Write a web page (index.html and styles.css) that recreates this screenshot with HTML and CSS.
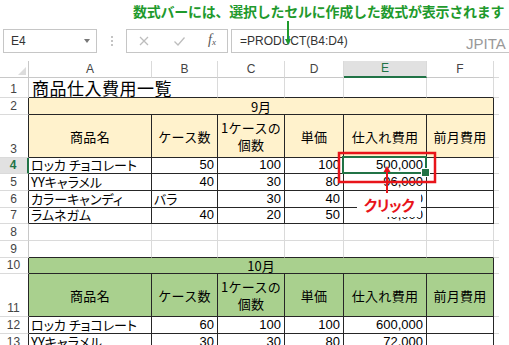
FILE: index.html
```html
<!DOCTYPE html>
<html lang="ja">
<head>
<meta charset="utf-8">
<title>商品仕入費用一覧</title>
<link rel="stylesheet" href="styles.css">
</head>
<body>
<div class="annot">数式バーには、選択したセルに作成した数式が表示されます</div>

<div class="fbar">
  <div class="namebox"><span>E4</span><span class="caret"></span></div>
  <div class="dots"><i></i><i></i><i></i></div>
  <div class="btns">
    <svg class="ico" width="12" height="12" viewBox="0 0 12 12"><path d="M2 2 L10 10 M10 2 L2 10" stroke="#bdbdbd" stroke-width="1.3" fill="none"/></svg>
    <svg class="ico" width="13" height="12" viewBox="0 0 13 12"><path d="M1.5 6.5 L5 10 L11.5 2.5" stroke="#bdbdbd" stroke-width="1.3" fill="none"/></svg>
    <span class="fx">f<sub>x</sub></span>
  </div>
  <div class="fbox">=PRODUCT(B4:D4)</div>
</div>

<div class="sheet">
  <div class="c corner"></div>
  <div class="c ch">A</div>
  <div class="c ch">B</div>
  <div class="c ch">C</div>
  <div class="c ch">D</div>
  <div class="c ch selc">E</div>
  <div class="c ch">F</div>
  <div class="c ch g"></div>

  <div class="c rh">1</div>
  <div class="c title bt span2">商品仕入費用一覧</div>
  <div class="c bt"></div>
  <div class="c bt"></div>
  <div class="c bt"></div>
  <div class="c bt"></div>
  <div class="c g"></div>

  <div class="c rh rt">2</div>
  <div class="c t y mid span6">9月</div>
  <div class="c g"></div>

  <div class="c rh rt">3</div>
  <div class="c t y hd">商品名</div>
  <div class="c t y hd">ケース数</div>
  <div class="c t y hd">1ケースの<br>個数</div>
  <div class="c t y hd">単価</div>
  <div class="c t y hd">仕入れ費用</div>
  <div class="c t y hd">前月費用</div>
  <div class="c g"></div>

  <div class="c rh rt selr">4</div>
  <div class="c t jp">ロッカ チョコレート</div>
  <div class="c t r">50</div>
  <div class="c t r">100</div>
  <div class="c t r">100</div>
  <div class="c t r sel">500,000</div>
  <div class="c t"></div>
  <div class="c g"></div>

  <div class="c rh rt">5</div>
  <div class="c t jp">YYキャラメル</div>
  <div class="c t r">40</div>
  <div class="c t r">30</div>
  <div class="c t r">80</div>
  <div class="c t r">96,000</div>
  <div class="c t"></div>
  <div class="c g"></div>

  <div class="c rh rt">6</div>
  <div class="c t jp">カラーキャンディ</div>
  <div class="c t jp">バラ</div>
  <div class="c t r">30</div>
  <div class="c t r">40</div>
  <div class="c t r">1,200</div>
  <div class="c t"></div>
  <div class="c g"></div>

  <div class="c rh rt">7</div>
  <div class="c t jp">ラムネガム</div>
  <div class="c t r">40</div>
  <div class="c t r">20</div>
  <div class="c t r">50</div>
  <div class="c t r">40,000</div>
  <div class="c t"></div>
  <div class="c g"></div>

  <div class="c rh">8</div>
  <div class="c"></div>
  <div class="c"></div>
  <div class="c"></div>
  <div class="c"></div>
  <div class="c"></div>
  <div class="c"></div>
  <div class="c g"></div>

  <div class="c rh">9</div>
  <div class="c bt"></div>
  <div class="c bt"></div>
  <div class="c bt"></div>
  <div class="c bt"></div>
  <div class="c bt"></div>
  <div class="c bt"></div>
  <div class="c g"></div>

  <div class="c rh rt">10</div>
  <div class="c t gr mid span6">10月</div>
  <div class="c g"></div>

  <div class="c rh rt">11</div>
  <div class="c t gr hd">商品名</div>
  <div class="c t gr hd">ケース数</div>
  <div class="c t gr hd">1ケースの<br>個数</div>
  <div class="c t gr hd">単価</div>
  <div class="c t gr hd">仕入れ費用</div>
  <div class="c t gr hd">前月費用</div>
  <div class="c g"></div>

  <div class="c rh rt">12</div>
  <div class="c t jp">ロッカ チョコレート</div>
  <div class="c t r">60</div>
  <div class="c t r">100</div>
  <div class="c t r">100</div>
  <div class="c t r">600,000</div>
  <div class="c t"></div>
  <div class="c g"></div>

  <div class="c rh rt">13</div>
  <div class="c t jp">YYキャラメル</div>
  <div class="c t r">30</div>
  <div class="c t r">30</div>
  <div class="c t r">80</div>
  <div class="c t r">72,000</div>
  <div class="c t"></div>
  <div class="c g"></div>
</div>

<div class="wm">JPITA</div>

<svg class="overlay" width="509" height="345" viewBox="0 0 509 345">
  <line x1="288" y1="21" x2="288" y2="41" stroke="#1f9a2d" stroke-width="2"/>
  <polygon points="285,39 291,39 288,45" fill="#1f9a2d"/>
  <rect x="339" y="153" width="96" height="29" fill="none" stroke="#e8141a" stroke-width="2.5"/>
  <line x1="387" y1="171" x2="387" y2="194" stroke="#e8141a" stroke-width="2"/>
  <polygon points="383.5,172 390.5,172 387,166" fill="#e8141a"/>
</svg>
<div class="click">クリック</div>
</body>
</html>
```
FILE: styles.css
```css
* {
  box-sizing: border-box;
  margin: 0;
  padding: 0;
}

html, body {
  width: 509px;
  height: 345px;
  overflow: hidden;
  background: #fff;
}

body {
  position: relative;
  font-family: "Liberation Sans", "Noto Sans CJK JP", sans-serif;
  color: #000;
}

/* top annotation */
.annot {
  height: 24px;
  padding: 1px 0 0 133px;
  font-family: "Noto Sans CJK JP", sans-serif;
  font-weight: bold;
  font-size: 14px;
  line-height: 20px;
  letter-spacing: -0.25px;
  color: #1f9a2d;
  white-space: nowrap;
}

/* formula bar */
.fbar {
  display: flex;
  height: 24px;
  margin-top: 5px;
}

.namebox {
  margin-left: 3px;
  width: 94px;
  border: 1px solid #c6c6c6;
  display: flex;
  align-items: center;
  justify-content: space-between;
  padding: 0 6px 0 7px;
  font-size: 12px;
  color: #333;
}

.caret {
  width: 0;
  height: 0;
  border-left: 3.5px solid transparent;
  border-right: 3.5px solid transparent;
  border-top: 4px solid #777;
}

.dots {
  width: 29px;
  display: flex;
  flex-direction: column;
  align-items: center;
  justify-content: center;
  gap: 2px;
}

.dots i {
  width: 2px;
  height: 2px;
  background: #c4c4c4;
}

.btns {
  width: 102px;
  border: 1px solid #c6c6c6;
  display: flex;
  align-items: center;
  justify-content: space-between;
  padding: 0 11px 0 11px;
}

.fx {
  font-family: "Liberation Serif", serif;
  font-style: italic;
  font-size: 14px;
  color: #555;
  line-height: 14px;
}

.fx sub {
  font-size: 9px;
  vertical-align: -1px;
}

.fbox {
  margin-left: 3px;
  width: 278px;
  border-top: 1px solid #c6c6c6;
  border-left: 1px solid #c6c6c6;
  border-bottom: 1px solid #c6c6c6;
  padding-left: 8px;
  font-size: 12px;
  color: #333;
  display: flex;
  align-items: center;
}

/* spreadsheet */
.sheet {
  margin-top: 8px;
  display: grid;
  grid-template-columns: 29px 123px 66px 67px 59px 83px 67px 5px;
  grid-template-rows: 17px 20px 17px 43px 16px 17px 17px 16px 17px 17px 16px 43px 17px 17px;
  font-size: 13px;
}

.c {
  border-right: 1px solid #dadada;
  border-bottom: 1px solid #dadada;
  display: flex;
  align-items: flex-end;
  padding: 0 3px 1px 2px;
  line-height: 15px;
  white-space: nowrap;
  min-width: 0;
}

.g {
  border-right: none;
}

.span2 {
  grid-column: span 2;
}

.span6 {
  grid-column: span 6;
}

.corner {
  position: relative;
  border-right-color: #c8c8c8;
  border-bottom-color: #c8c8c8;
}

.corner::after {
  content: "";
  position: absolute;
  right: 2px;
  bottom: 2px;
  width: 0;
  height: 0;
  border-left: 8px solid transparent;
  border-bottom: 8px solid #dcdcdc;
}

.ch {
  justify-content: center;
  align-items: center;
  padding: 0;
  font-size: 12px;
  color: #444;
  border-bottom-color: #c8c8c8;
}

.ch.g {
  border-bottom-color: #dadada;
}

.selc {
  background: #e1e1e1;
  color: #217346;
  border-bottom: 2px solid #217346;
}

.rh {
  justify-content: center;
  padding: 0 1px 0 0;
  font-size: 12px;
  color: #444;
  border-right-color: #c8c8c8;
}

.rt {
  border-right-color: #262626;
}

.selr {
  background: #e1e1e1;
  color: #217346;
  font-weight: bold;
  border-right: 2px solid #217346;
}

.title {
  font-family: "Noto Sans CJK JP", sans-serif;
  font-size: 17px;
  letter-spacing: 0.5px;
  line-height: 19px;
  padding-bottom: 0;
  padding-left: 3px;
}

.bt {
  border-bottom-color: #262626;
}

.t {
  border-right-color: #262626;
  border-bottom-color: #262626;
}

.y {
  background: #fff2cc;
}

.gr {
  background: #a9d08e;
}

.mid {
  justify-content: center;
  align-items: center;
  font-family: "Noto Sans CJK JP", sans-serif;
  padding: 0;
}

.hd {
  justify-content: center;
  align-items: center;
  text-align: center;
  white-space: normal;
  font-family: "Noto Sans CJK JP", sans-serif;
  line-height: 17px;
  letter-spacing: 0.3px;
  padding: 0;
}

.jp {
  font-family: "Noto Sans CJK JP", sans-serif;
  font-feature-settings: "palt";
}

.r {
  justify-content: flex-end;
}

.sel {
  position: relative;
}

.sel::after {
  content: "";
  position: absolute;
  left: -2px;
  top: -2px;
  right: -1px;
  bottom: -1px;
  border: 2px solid #217346;
}

.sel::before {
  content: "";
  position: absolute;
  right: -4px;
  bottom: -4px;
  width: 7px;
  height: 7px;
  background: #217346;
  border: 1px solid #fff;
  z-index: 1;
}

/* overlays */
.wm {
  position: absolute;
  left: 466px;
  top: 36px;
  font-size: 15px;
  line-height: 15px;
  color: #999;
}

.overlay {
  position: absolute;
  left: 0;
  top: 0;
  pointer-events: none;
}

.click {
  position: absolute;
  left: 357px;
  top: 193px;
  width: 64px;
  height: 24px;
  background: #fff;
  color: #e8141a;
  font-family: "Noto Sans CJK JP", sans-serif;
  font-weight: bold;
  font-size: 15px;
  font-feature-settings: "palt";
  letter-spacing: -0.5px;
  line-height: 24px;
  text-align: center;
}
```
